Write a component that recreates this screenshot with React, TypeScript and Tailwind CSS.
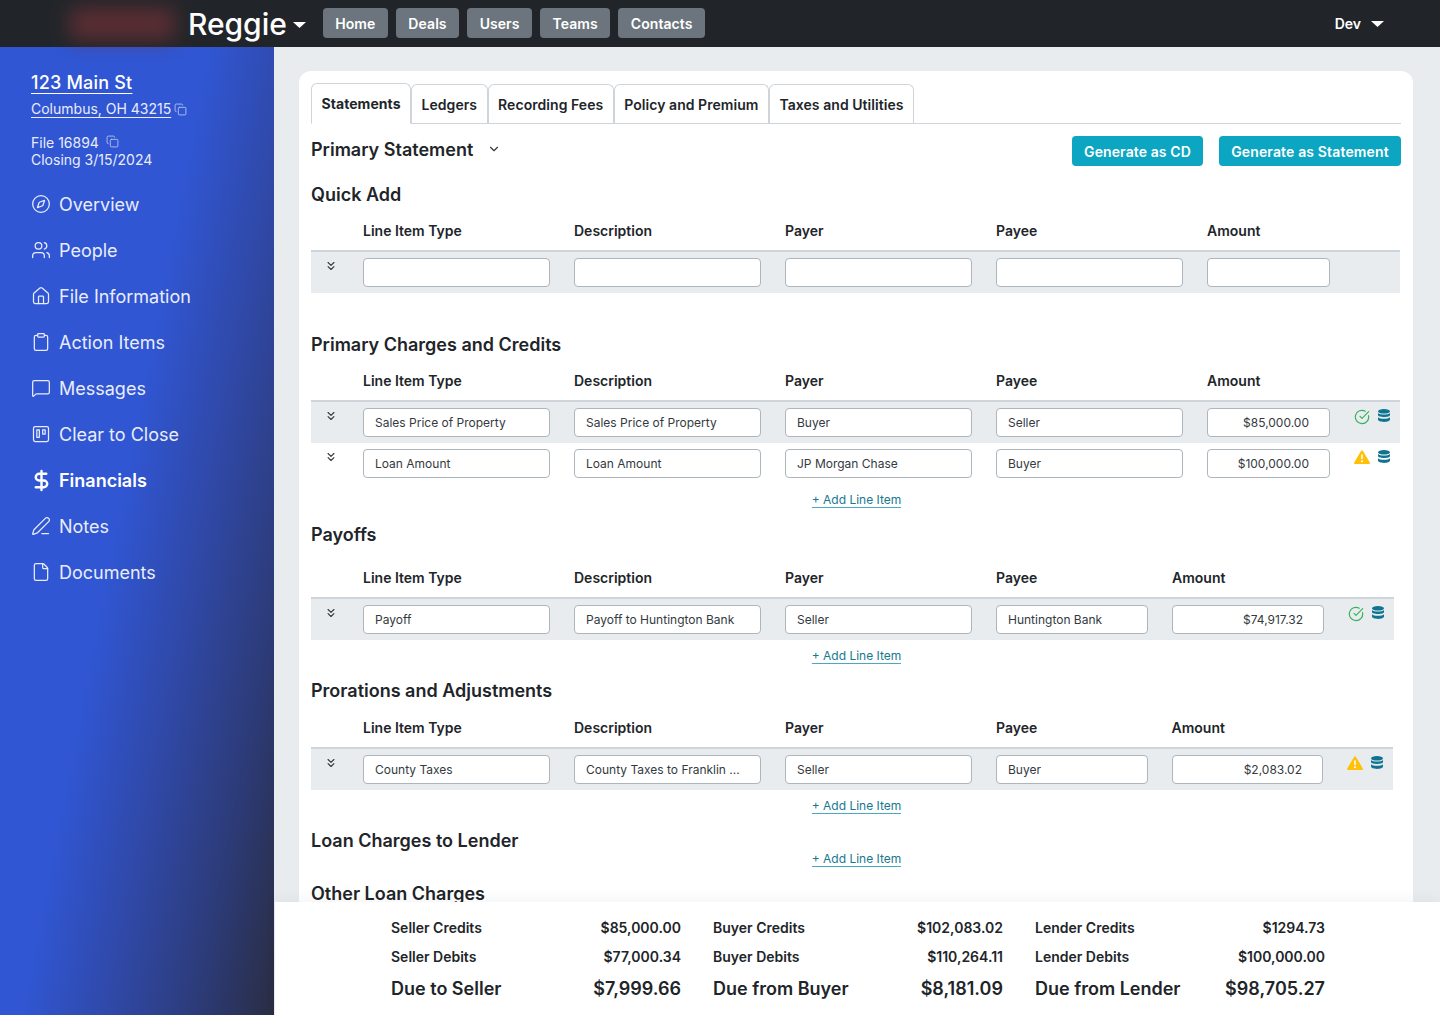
import React from "react";
import { Compass, Users, House, Clipboard, MessageSquare, Trello, DollarSign, PenLine, File, Copy, ChevronDown, ChevronsDown, CircleCheckBig } from "lucide-react";

const Caret = ({ className }: { className: string }) => (
  <svg viewBox="0 0 13 6" className={className} fill="currentColor"><path d="M0 0h13L6.500 6z" /></svg>
);

const nav = [
  { label: "Overview", Icon: Compass },
  { label: "People", Icon: Users },
  { label: "File Information", Icon: House },
  { label: "Action Items", Icon: Clipboard },
  { label: "Messages", Icon: MessageSquare },
  { label: "Clear to Close", Icon: Trello },
  { label: "Financials", Icon: DollarSign, active: true },
  { label: "Notes", Icon: PenLine },
  { label: "Documents", Icon: File },
];

const Db = () => (
  <svg viewBox="0 0 12 13" className="w-[12px] h-[13px] text-[#0e7490]" fill="currentColor">
    <ellipse cx="6" cy="2.300" rx="6" ry="2.300" />
    <path d="M0 3.900v2c0 1.200 2.700 2 6 2s6-.8 6-2v-2c-1 1-3.300 1.600-6 1.600S1 4.900 0 3.900z" />
    <path d="M0 8.300v2.300C0 11.900 2.700 13 6 13s6-1.100 6-2.400V8.300c-1 1-3.300 1.500-6 1.500S1 9.300 0 8.300z" />
  </svg>
);
const Warn = () => (
  <svg viewBox="0 0 16 14" className="w-[16px] h-[14px]">
    <path d="M8 0.300c.4 0 .8.200 1 .6l6.800 11.500c.4.700-.1 1.500-1 1.500H1.200c-.9 0-1.400-.8-1-1.500L7 .9c.2-.4.600-.6 1-.6z" fill="#ffc107" />
    <rect x="7.200" y="4.300" width="1.600" height="5" rx=".7" fill="#fff" />
    <circle cx="8" cy="11.200" r="1" fill="#fff" />
  </svg>
);

type Row = { v: [string, string, string, string, string]; status: "ok" | "warn" };

const Input = ({ value, right }: { value?: string; right?: boolean }) => (
  <div className={`h-[29px] bg-white border border-[#adb5bd] rounded-[4px] text-[12px] leading-[27px] text-[#343a40] truncate ${right ? "text-right pr-[20px] pl-[11px]" : "px-[11px]"}`}>
    {value}
  </div>
);

const Heading = ({ children, className }: { children: React.ReactNode; className: string }) => (
  <h2 className={`text-[18px] leading-[22px] font-semibold text-[#212529] ${className}`}>{children}</h2>
);

const headers = ["Line Item Type", "Description", "Payer", "Payee", "Amount"];

function ItemTable({ cols, rows, width }: { cols: string; rows: Row[]; width: string }) {
  return (
    <div className={width}>
      <div className={`grid ${cols} h-[37px] items-center border-b-2 border-[#ced4da]`}>
        <div />
        {headers.map((h) => (
          <div key={h} className="text-[14px] font-semibold text-[#212529] leading-[17px] -mt-[4px]">{h}</div>
        ))}
        <div />
      </div>
      {rows.map((r, i) => (
        <div key={i} className={`grid ${cols} h-[41px] pt-[6px] ${i % 2 === 0 ? "bg-[#e9ecef]" : "bg-white"}`}>
          <div className="pl-[13px] pt-[1px]">
            <ChevronsDown className="w-[14px] h-[14px] text-[#343a40]" strokeWidth={2} />
          </div>
          {r.v.map((v, j) => (
            <Input key={j} value={v} right={j === 4} />
          ))}
          <div className="flex items-start gap-[8px] pt-[1px] h-[17px]">
            {r.status === "ok" ? <CircleCheckBig className="w-[16px] h-[16px] text-[#34b35a]" strokeWidth={1.750} /> : <Warn />}
            <Db />
          </div>
        </div>
      ))}
    </div>
  );
}

const AddLine = ({ className }: { className: string }) => (
  <div className={`flex justify-center ${className}`}>
    <span className="text-[12px] leading-[15px] text-[#17788e] border-b border-[#4aa8bf]">+ Add Line Item</span>
  </div>
);

const Stat = ({ label, value, big }: { label: string; value: string; big?: boolean }) => (
  <div className={`flex justify-between ${big ? "text-[18px] leading-[22px] font-semibold" : "text-[14px] leading-[17px] font-semibold"} text-[#212529]`}>
    <span>{label}</span>
    <span>{value}</span>
  </div>
);

const Summary = ({ rows }: { rows: [string, string][] }) => (
  <div className="flex flex-col">
    <Stat label={rows[0][0]} value={rows[0][1]} />
    <div className="mt-[12px]"><Stat label={rows[1][0]} value={rows[1][1]} /></div>
    <div className="mt-[13px]"><Stat big label={rows[2][0]} value={rows[2][1]} /></div>
  </div>
);

export default function App() {
  const cols5 = "grid-cols-[28px_187px_187px_187px_187px_123px_1fr] gap-x-[24px]";
  return (
    <div className="h-screen w-[1440px] flex flex-col overflow-hidden font-['Inter',sans-serif] text-[#212529]">
      <header className="h-[47px] shrink-0 bg-[#212529] flex items-center text-white">
        <div className="ml-[70px] w-[105px] h-[32px] bg-[#6a3036] blur-[10px] opacity-80" />
        <div className="ml-[13px] text-[30px] font-medium leading-[36px] tracking-[-0.05px]">Reggie</div>
        <Caret className="ml-[6px] mt-[2px] w-[13px] h-[6px]" />
        <nav className="ml-[17px] -mt-[1px] flex gap-[8px]">
          {["Home", "Deals", "Users", "Teams", "Contacts"].map((t) => (
            <div key={t} className="h-[30px] px-[12.500px] flex items-center bg-[#6c757d] rounded-[4px] text-[14px] font-semibold tracking-[0.07px]">{t}</div>
          ))}
        </nav>
        <div className="ml-auto mr-[56px] flex items-center">
          <span className="text-[14px] font-semibold">Dev</span>
          <Caret className="ml-[10px] w-[13px] h-[6px]" />
        </div>
      </header>
      <div className="flex-1 flex min-h-0">
        <aside className="w-[275px] shrink-0 border-r border-[#e9ecef] bg-[linear-gradient(101deg,#3056d3_45%,#3049a8_64%,#2c3a75_84%,#2a2d42_100%)] text-[#e9edfb] pl-[31px] pt-[25px]">
          <div className="text-[18px] leading-[22px] font-medium text-white underline-offset-[4px] underline decoration-1 w-fit tracking-[0.2px]">123 Main St</div>
          <div className="mt-[6px] flex items-center text-[14px] leading-[17px]">
            <span className="underline underline-offset-[3px] decoration-1">Columbus, OH 43215</span>
            <Copy className="ml-[3px] mt-[2px] w-[13px] h-[13px] opacity-80" strokeWidth={1.500} />
          </div>
          <div className="mt-[17px] flex items-center text-[14px] leading-[17px]">
            <span>File 16894</span>
            <Copy className="ml-[7px] w-[13px] h-[13px] opacity-80 -mt-[2px]" strokeWidth={1.500} />
          </div>
          <div className="text-[14px] leading-[17px]">Closing 3/15/2024</div>
          <ul className="mt-[13px]">
            {nav.map(({ label, Icon, active }) => (
              <li key={label} className={`h-[46px] flex items-center gap-[8px] text-[18px] ${active ? "font-semibold text-white" : "font-normal"}`}>
                <span className="w-[20px] h-[20px] flex items-center justify-center">
                  <Icon className={active ? "w-[23px] h-[23px] shrink-0" : "w-[20px] h-[20px] shrink-0"} strokeWidth={active ? 2.500 : 1.500} />
                </span>
                <span>{label}</span>
              </li>
            ))}
          </ul>
        </aside>
        <div className="flex-1 min-w-0 flex flex-col bg-[#e9ecef]">
          <main className="flex-1 min-h-0 overflow-hidden pl-[24px] pr-[27px] pt-[24px]">
            <div className="bg-white rounded-t-[12px] pl-[12px] pr-[12px] pt-[12px] h-[900px]">
              <div className="flex items-end h-[41px] border-b border-[#ced4da]">
                {["Statements", "Ledgers", "Recording Fees", "Policy and Premium", "Taxes and Utilities"].map((t, i) => (
                  <div key={t} className={`px-[9.500px] text-[14px] border border-[#ced4da] rounded-t-[6px] flex items-center ${i === 0 ? "h-[41px] border-b-white -mb-[1px] font-bold tracking-[0.05px]" : "h-[39px] border-b-0 pt-[1px] font-semibold tracking-[0.05px]"}`}>{t}</div>
                ))}
              </div>
              <div className="flex items-start mt-[12px] h-[30px]">
                <div className="text-[18px] font-semibold leading-[28px] text-[#212529]">Primary Statement</div>
                <ChevronDown className="ml-[14px] mt-[6px] w-[14px] h-[14px] text-[#343a40]" strokeWidth={2} />
                <div className="ml-auto flex gap-[16px]">
                  <div className="h-[30px] w-[131px] bg-[#0ca5c2] rounded-[4px] text-white text-[14px] font-semibold flex items-center justify-center tracking-[0.1px]">Generate as CD</div>
                  <div className="h-[30px] w-[182px] bg-[#0ca5c2] rounded-[4px] text-white text-[14px] font-semibold flex items-center justify-center tracking-[0.15px]">Generate as Statement</div>
                </div>
              </div>
              <Heading className="mt-[18px]">Quick Add</Heading>
              <div className="w-[1089px] mt-[9px]">
                <div className={`grid ${cols5} h-[37px] items-center border-b-2 border-[#ced4da]`}>
                  <div />
                  {headers.map((h) => <div key={h} className="text-[14px] font-semibold leading-[17px] -mt-[4px]">{h}</div>)}
                </div>
                <div className={`grid ${cols5} h-[41px] pt-[6px] bg-[#e9ecef]`}>
                  <div className="pl-[13px] pt-[1px]"><ChevronsDown className="w-[14px] h-[14px] text-[#343a40]" /></div>
                  <Input /><Input /><Input /><Input /><Input />
                </div>
              </div>
              <Heading className="mt-[41px]">Primary Charges and Credits</Heading>
              <div className="mt-[9px]">
                <ItemTable width="w-[1089px]" cols={cols5} rows={[
                  { v: ["Sales Price of Property", "Sales Price of Property", "Buyer", "Seller", "$85,000.00"], status: "ok" },
                  { v: ["Loan Amount", "Loan Amount", "JP Morgan Chase", "Buyer", "$100,000.00"], status: "warn" },
                ]} />
              </div>
              <AddLine className="w-[1091px] mt-[8px]" />
              <Heading className="mt-[16px]">Payoffs</Heading>
              <div className="mt-[16px]">
                <ItemTable width="w-[1083px]" cols="grid-cols-[28px_187px_187px_187px_152px_152px_1fr] gap-x-[24px]" rows={[
                  { v: ["Payoff", "Payoff to Huntington Bank", "Seller", "Huntington Bank", "$74,917.32"], status: "ok" },
                ]} />
              </div>
              <AddLine className="w-[1091px] mt-[8px]" />
              <Heading className="mt-[16px]">Prorations and Adjustments</Heading>
              <div className="mt-[10px]">
                <ItemTable width="w-[1082px]" cols="grid-cols-[28px_187px_187px_187px_151.500px_151.500px_1fr] gap-x-[24px]" rows={[
                  { v: ["County Taxes", "County Taxes to Franklin ...", "Seller", "Buyer", "$2,083.02"], status: "warn" },
                ]} />
              </div>
              <AddLine className="w-[1091px] mt-[8px]" />
              <Heading className="mt-[16px]">Loan Charges to Lender</Heading>
              <AddLine className="w-[1091px] -mt-[1px]" />
              <Heading className="mt-[16px]">Other Loan Charges</Heading>
            </div>
          </main>
          <footer className="h-[113px] shrink-0 bg-white shadow-[0_-4px_12px_rgba(0,0,0,0.04)] pl-[116px] pt-[17px] grid grid-cols-[290px_290px_290px] gap-x-[32px] content-start">
            <Summary rows={[["Seller Credits", "$85,000.00"], ["Seller Debits", "$77,000.34"], ["Due to Seller", "$7,999.66"]]} />
            <Summary rows={[["Buyer Credits", "$102,083.02"], ["Buyer Debits", "$110,264.11"], ["Due from Buyer", "$8,181.09"]]} />
            <Summary rows={[["Lender Credits", "$1294.73"], ["Lender Debits", "$100,000.00"], ["Due from Lender", "$98,705.27"]]} />
          </footer>
        </div>
      </div>
    </div>
  );
}
